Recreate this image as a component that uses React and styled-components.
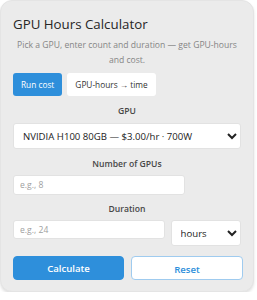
import React, { useState } from 'react';
import styled, { createGlobalStyle } from 'styled-components';

const Global = createGlobalStyle`
  body {
    margin: 0;
    background: #ffffff;
    font-family: "Open Sans", "Liberation Sans", sans-serif;
  }
`

const Card = styled.div`
  width: 254px;
  box-sizing: border-box;
  background: #ebebeb;
  border-radius: 12px;
  padding: 14px 12px 11px;
  box-shadow: 0 2px 3px rgba(0,0,0,0.12);
  border: 1px solid #e4e4e4;
`

const Title = styled.h1`
  margin: 0;
  font-family: "Open Sans", "Liberation Sans", sans-serif;
  font-weight: 400;
  font-size: 13.3px;
  line-height: 18px;
  color: #262626;
`

const Subtitle = styled.p`
  margin: 5px 0 0;
  font-size: 8.6px;
  line-height: 14.5px;
  color: #858585;
  text-align: center;
`

const Tabs = styled.div`
  display: flex;
  gap: 5px;
  margin-top: 6px;
`

const Tab = styled.button`
  height: 23px;
  padding: 0 8px;
  border: none;
  border-radius: 3px;
  font-family: inherit;
  font-size: 8.3px;
  background: ${p => (p.$active ? '#2e8fdb' : '#ffffff')};
  color: ${p => (p.$active ? '#ffffff' : '#333333')};
  cursor: pointer;
`

const Field = styled.div`
  display: flex;
  flex-direction: column;
  margin-top: ${p => p.$top || 10}px;
`

const Label = styled.label`
  text-align: center;
  font-size: 8.6px;
  font-weight: 600;
  color: #474747;
  line-height: 12px;
  margin-bottom: ${p => p.$gap || 6}px;
`

const Select = styled.select`
  box-sizing: border-box;
  width: ${p => p.$width || '100%'};
  height: 26px;
  padding: 0 5px;
  font-family: inherit;
  font-size: 9.6px;
  color: #222;
  background: #fff;
  border: 1px solid #e2e2e2;
  border-radius: 3px;
  outline: none;
`

const Input = styled.input`
  box-sizing: border-box;
  width: ${p => p.$width}px;
  height: ${p => p.$height || 20}px;
  padding: 0 6px;
  font-family: inherit;
  font-size: 8.6px;
  color: #222;
  background: #fff;
  border: 1px solid #e2e2e2;
  border-radius: 3px;
  outline: none;
  &::placeholder {
    color: #a0a0a0;
  }
`

const Row = styled.div`
  display: flex;
  align-items: flex-start;
  gap: 6px;
`

const Actions = styled.div`
  display: grid;
  grid-template-columns: 111px 112px;
  gap: 7px;
  margin-top: 10px;
`

const ActionButton = styled.button`
  height: 24px;
  border-radius: 4px;
  font-family: inherit;
  font-size: 9.6px;
  font-weight: 600;
  cursor: pointer;
  background: ${p => (p.$primary ? '#2e8fdb' : '#ffffff')};
  color: ${p => (p.$primary ? '#ffffff' : '#2e8fdb')};
  border: 1px solid ${p => (p.$primary ? '#2e8fdb' : '#9fcbef')};
  padding: ${p => (p.$primary ? '0' : '2px 0 0')};
`

export default function App() {
  const [mode, setMode] = useState('cost');
  return (
    <>
      <Global />
      <Card>
        <Title>GPU Hours Calculator</Title>
        <Subtitle>Pick a GPU, enter count and duration — get GPU-hours and cost.</Subtitle>
        <Tabs>
          <Tab $active={mode === 'cost'} onClick={() => setMode('cost')}>Run cost</Tab>
          <Tab $active={mode === 'time'} onClick={() => setMode('time')}>GPU-hours → time</Tab>
        </Tabs>
        <Field $top={9}>
          <Label>GPU</Label>
          <Select defaultValue="h100">
            <option value="h100">NVIDIA H100 80GB — $3.00/hr · 700W</option>
          </Select>
        </Field>
        <Field $top={9}>
          <Label $gap={5}>Number of GPUs</Label>
          <Input $width={172} placeholder="e.g., 8" />
        </Field>
        <Field $top={8}>
          <Label $gap={5}>Duration</Label>
          <Row>
            <Input $width={153} $height={19} placeholder="e.g., 24" />
            <Select $width="71px" defaultValue="hours">
              <option value="hours">hours</option>
              <option value="days">days</option>
            </Select>
          </Row>
        </Field>
        <Actions>
          <ActionButton $primary>Calculate</ActionButton>
          <ActionButton>Reset</ActionButton>
        </Actions>
      </Card>
    </>
  );
}
